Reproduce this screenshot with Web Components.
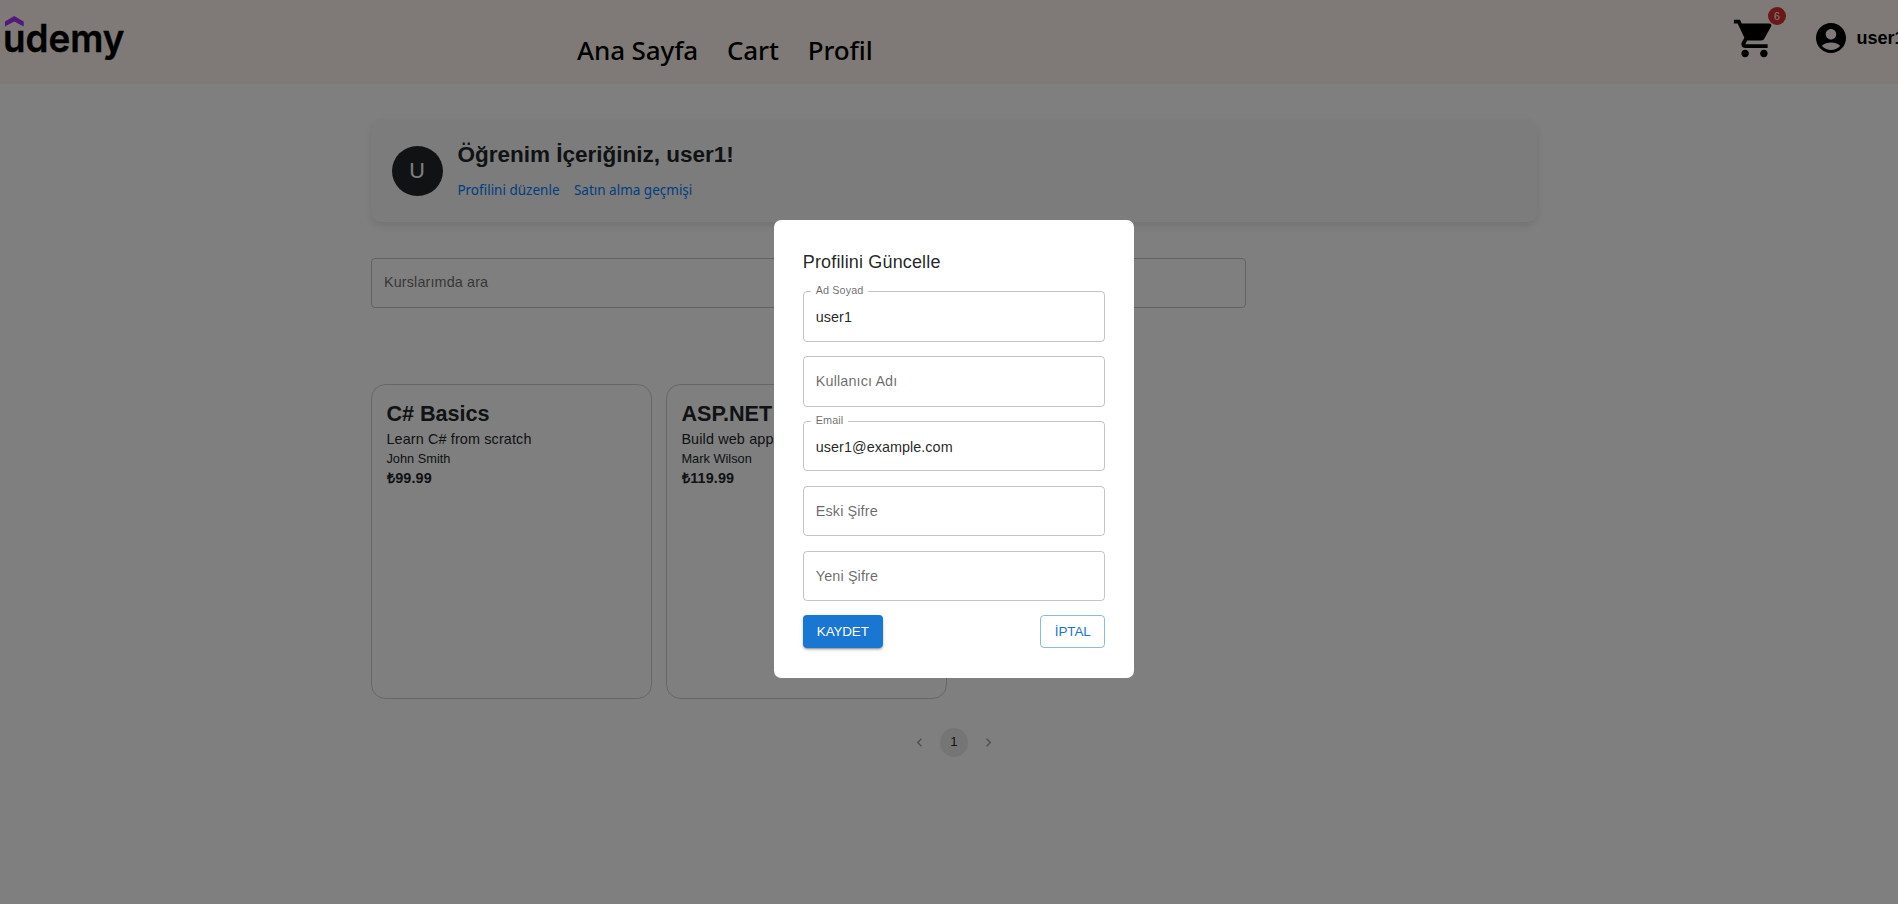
<!DOCTYPE html>
<html lang="tr">
<head>
<meta charset="utf-8">
<title>Udemy</title>
<style>
html,body{margin:0;padding:0;background:#fff;height:904px;overflow:hidden}
body{font-family:"Liberation Sans",Arial,sans-serif;color:#212529}
</style>
</head>
<body>
<udemy-app></udemy-app>
<script>
const define = (name, css, html) => {
  const t = document.createElement('template');
  t.innerHTML = `<style>*{box-sizing:border-box}${css}</style>${html}`;
  customElements.define(name, class extends HTMLElement {
    constructor() {
      super();
      this.attachShadow({ mode: 'open' }).appendChild(t.content.cloneNode(true));
    }
  });
};

define('site-logo', `
:host{display:block;width:124px;height:62px;color:#000}
svg{display:block}
text{font:600 38px Inter,sans-serif}
`, `<svg width="128" height="66" viewBox="0 0 128 66">
<path d="M5 21.6 14.2 16 23.7 21.6V26.6L14.2 21.4 5 26.6z" fill="#a435f0"/>
<text x="3" y="51.6" textLength="121.5" lengthAdjust="spacingAndGlyphs" stroke="#000" stroke-width=".4">udemy</text></svg>`);

define('nav-link', `
:host{display:block;font:500 26px/36px "Noto Sans","Open Sans",sans-serif;letter-spacing:-.1px;color:#000;white-space:nowrap}
`, `<slot></slot>`);

define('cart-button', `
:host{display:block;position:relative;width:45px;height:45px}
svg{display:block;width:45px;height:45px}
.badge{position:absolute;left:36px;top:-9px;width:18px;height:18px;border-radius:50%;background:#d32f2f;color:#fff;font-size:10.8px;line-height:18px;text-align:center}
`, `<svg viewBox="0 0 24 24"><path d="M7 18c-1.1 0-1.99.9-1.99 2S5.9 22 7 22s2-.9 2-2-.9-2-2-2M1 2v2h2l3.6 7.59-1.35 2.45c-.16.28-.25.61-.25.96 0 1.1.9 2 2 2h12v-2H7.42c-.14 0-.25-.11-.25-.25l.03-.12.9-1.63h7.45c.75 0 1.41-.41 1.75-1.03l3.58-6.49c.08-.14.12-.31.12-.48 0-.55-.45-1-1-1H5.21l-.94-2zm16 16c-1.1 0-1.99.9-1.99 2s.89 2 1.99 2 2-.9 2-2-.9-2-2-2"/></svg>
<div class="badge"><slot></slot></div>`);

define('user-menu', `
:host{display:flex;align-items:center;gap:7.5px;height:36px;font-weight:700;font-size:18px;color:#000}
svg{display:block;width:36px;height:36px}
`, `<svg viewBox="0 0 24 24"><path d="M12 2C6.48 2 2 6.48 2 12s4.48 10 10 10 10-4.48 10-10S17.52 2 12 2m0 4c1.93 0 3.5 1.57 3.5 3.5S13.93 13 12 13s-3.5-1.57-3.5-3.5S10.07 6 12 6m0 14c-2.03 0-4.43-.82-6.14-2.88C7.55 15.8 9.68 15 12 15s4.45.8 6.14 2.12C16.43 19.18 14.03 20 12 20"/></svg><span><slot></slot></span>`);

define('site-header', `
:host{display:flex;align-items:flex-start;height:84px;background:#fff5ee}
nav{display:flex;gap:28.8px;margin:32px 0 0 453px;width:1155px}
cart-button{margin-top:16px;flex:none}
user-menu{margin:20px 0 0 36px;flex:none}
site-logo{flex:none}
`, `<site-logo></site-logo>
<nav><nav-link>Ana Sayfa</nav-link><nav-link>Cart</nav-link><nav-link>Profil</nav-link></nav>
<cart-button>6</cart-button><user-menu>user1</user-menu>`);

define('profile-banner', `
:host{display:flex;height:103px;border-radius:10px;background:#f9f9f9;box-shadow:0 4px 8px rgba(0,0,0,.1);padding:0 20.6px}
.avatar{width:51px;height:50.4px;border-radius:50%;background:#212529;color:#fff;font-size:21.6px;line-height:49px;text-align:center;margin:26.5px 14.8px 0 0}
h2{margin:22px 0 0;font-size:22.5px;line-height:27px;font-weight:700;white-space:nowrap}
.links{display:flex;gap:14.4px;margin-top:12px;font:13.5px/20px "Noto Sans","Open Sans",sans-serif;color:#007bff;white-space:nowrap}
`, `<div class="avatar">U</div><div><h2><slot></slot></h2><div class="links"><span>Profilini düzenle</span><span>Satın alma geçmişi</span></div></div>`);

define('text-field', `
:host{display:flex;align-items:center;position:relative;height:50.4px;border:1px solid rgba(0,0,0,.23);border-radius:4px;padding:0 12px;font-size:14.4px;line-height:20px;letter-spacing:.12px;color:rgba(0,0,0,.6);white-space:nowrap}
:host([filled]){color:rgba(0,0,0,.87);letter-spacing:.04px;padding-top:1px}
::slotted([slot=label]){position:absolute;left:7px;top:-9px;padding:0 5px;background:linear-gradient(#fff,#fff) 0 7px/100% 4px no-repeat;font-size:10.8px;line-height:14px;letter-spacing:.1px;color:rgba(0,0,0,.6)}
`, `<slot name="label"></slot><span><slot></slot></span>`);

define('course-card', `
:host{display:block;width:281px;height:315px;border:1px solid rgba(0,0,0,.2);border-radius:14.4px;padding:15px 14.4px;white-space:nowrap;overflow:hidden}
.t{font-weight:700;font-size:21.6px;line-height:26px;padding-top:1px}
.d{font-size:14.4px;line-height:22px;letter-spacing:.135px;margin-top:1px}
.a{font-size:12.8px;line-height:18px}
.p{font-size:14.4px;line-height:20px;font-weight:700;letter-spacing:.15px;padding-left:.6px}
`, `<div class="t"><slot name="title"></slot></div><div class="d"><slot name="desc"></slot></div><div class="a"><slot name="author"></slot></div><div class="p"><slot name="price"></slot></div>`);

define('page-nav', `
:host{display:flex;justify-content:center;align-items:center;gap:11.4px;height:29px}
svg{width:17px;height:17px;margin:0;fill:rgba(0,0,0,.38);display:block}
.n{width:28.8px;height:28.8px;border-radius:50%;background:rgba(0,0,0,.08);color:rgba(0,0,0,.87);text-align:center;font-size:13.2px;line-height:28.8px}
`, `<svg viewBox="0 0 24 24"><path d="M15.41 7.41 14 6l-6 6 6 6 1.41-1.41L10.83 12z"/></svg><div class="n">1</div><svg viewBox="0 0 24 24"><path d="M10 6 8.59 7.41 13.17 12l-4.58 4.59L10 18l6-6z"/></svg>`);

define('action-button', `
:host{display:flex;align-items:center;justify-content:center;height:33px;border-radius:4px;font-size:13.4px;letter-spacing:-.1px;background:#1976d2;color:#fff;box-shadow:0 3px 1px -2px rgba(0,0,0,.2),0 2px 2px rgba(0,0,0,.14),0 1px 5px rgba(0,0,0,.12);width:80px;white-space:nowrap}
:host([outlined]){background:none;color:#1976d2;border:1px solid rgba(25,118,210,.5);box-shadow:none;width:65px}
`, `<slot></slot>`);

define('profile-dialog', `
:host{display:flex;flex-direction:column;gap:14.4px;width:360px;height:457.2px;padding:28.8px;background:#fff;border-radius:7.2px}
h3{margin:0 0 -1px;height:28.8px;font-weight:400;font-size:18px;line-height:27px;letter-spacing:.15px;color:rgba(0,0,0,.87)}
.row{display:flex;justify-content:space-between}
`, `<h3>Profilini Güncelle</h3>
<text-field filled><span slot="label">Ad Soyad</span>user1</text-field>
<text-field>Kullanıcı Adı</text-field>
<text-field filled><span slot="label">Email</span>user1@example.com</text-field>
<text-field>Eski Şifre</text-field>
<text-field>Yeni Şifre</text-field>
<div class="row"><action-button>KAYDET</action-button><action-button outlined>İPTAL</action-button></div>`);

define('modal-backdrop', `
:host{position:fixed;left:0;top:0;width:1908px;height:904px;background:rgba(0,0,0,.5);display:flex;align-items:flex-start;justify-content:center;padding-top:220.4px}
`, `<slot></slot>`);

define('udemy-app', `
:host{display:block;width:1908px;height:904px;overflow:hidden}
main{width:1166px;margin:35px auto 0}
.search{width:875px;margin:36px 0 76px;padding-bottom:2px}
.cards{display:flex;gap:14px}
page-nav{margin-top:29px}
`, `<site-header></site-header>
<main>
<profile-banner>Öğrenim İçeriğiniz, user1!</profile-banner>
<text-field class="search">Kurslarımda ara</text-field>
<div class="cards">
<course-card><span slot="title">C# Basics</span><span slot="desc">Learn C# from scratch</span><span slot="author">John Smith</span><span slot="price">₺99.99</span></course-card>
<course-card><span slot="title">ASP.NET</span><span slot="desc">Build web apps</span><span slot="author">Mark Wilson</span><span slot="price">₺119.99</span></course-card>
</div>
<page-nav></page-nav>
</main>
<modal-backdrop><profile-dialog></profile-dialog></modal-backdrop>`);
</script>
</body>
</html>
